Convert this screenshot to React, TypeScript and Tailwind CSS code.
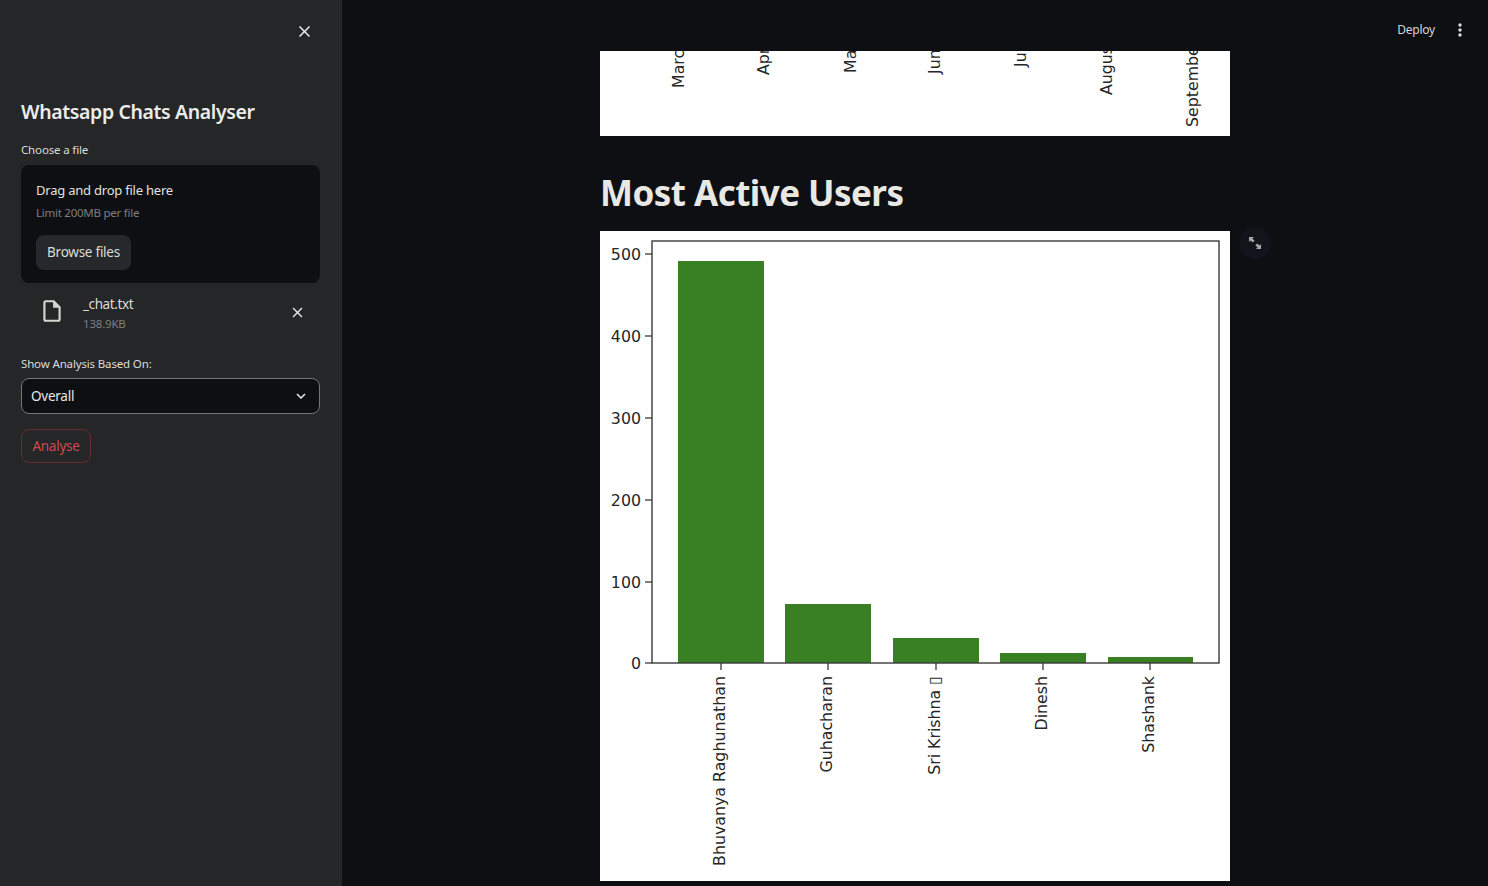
import React from "react";
import { MdClose, MdOutlineInsertDriveFile, MdMoreVert, MdKeyboardArrowDown } from "react-icons/md";

const sans = "font-['Noto_Sans','Open_Sans',sans-serif]";

const months = [
  { n: "March", x: 78, y: 37 },
  { n: "April", x: 163, y: 24 },
  { n: "May", x: 250, y: 22 },
  { n: "June", x: 334, y: 23 },
  { n: "July", x: 420, y: 16 },
  { n: "August", x: 506, y: 44 },
  { n: "September", x: 592, y: 76 },
];

const ticks = [
  { l: "500", y: 23 },
  { l: "400", y: 105 },
  { l: "300", y: 187 },
  { l: "200", y: 269 },
  { l: "100", y: 351 },
  { l: "0", y: 432 },
];

const bars = [
  { n: "Bhuvanya Raghunathan", x: 78, w: 86, top: 30, cx: 121 },
  { n: "Guhacharan", x: 185, w: 86, top: 373, cx: 228 },
  { n: "Sri Krishna ▯", x: 293, w: 86, top: 407, cx: 336 },
  { n: "Dinesh", x: 400, w: 86, top: 422, cx: 443 },
  { n: "Shashank", x: 508, w: 85, top: 426, cx: 550 },
];

function MonthsChart() {
  return (
    <div className="w-[630px] h-[85px] bg-white overflow-hidden shrink-0">
      <svg width="630" height="85" viewBox="0 0 630 85">
        {months.map((m) => (
          <text
            key={m.n}
            transform={`translate(${m.x + 6},${m.y}) rotate(-90)`}
            fontFamily="DejaVu Sans, sans-serif"
            fontSize="15.8"
            fill="#262626"
          >
            {m.n}
          </text>
        ))}
      </svg>
    </div>
  );
}

function UsersChart() {
  return (
    <div className="w-[630px] h-[650px] bg-white shrink-0">
      <svg width="630" height="650" viewBox="0 0 630 650">
        {bars.map((b) => (
          <rect key={b.n} x={b.x} y={b.top} width={b.w} height={432 - b.top} fill="#388023" />
        ))}
        <rect x="52" y="10" width="567" height="422" fill="none" stroke="#3a3a3a" strokeWidth="1.4" />
        {ticks.map((t) => (
          <g key={t.l}>
            <line x1="45" x2="52" y1={t.y} y2={t.y} stroke="#3a3a3a" strokeWidth="1.3" />
            <text x="41" y={t.y + 6} textAnchor="end" fontFamily="DejaVu Sans, sans-serif" fontSize="15.8" fill="#262626">
              {t.l}
            </text>
          </g>
        ))}
        {bars.map((b) => (
          <g key={b.n + "l"}>
            <line x1={b.cx} x2={b.cx} y1="432" y2="439" stroke="#3a3a3a" strokeWidth="1.3" />
            <text
              transform={`translate(${b.cx + 4},445) rotate(-90)`}
              textAnchor="end"
              fontFamily="DejaVu Sans, sans-serif"
              fontSize="15.8"
              fill="#262626"
            >
              {b.n}
            </text>
          </g>
        ))}
      </svg>
    </div>
  );
}

function Sidebar() {
  return (
    <aside className={`w-[342px] h-full shrink-0 bg-[#252628] flex flex-col px-[21px] ${sans}`}>
      <div className="h-[62px] flex items-center justify-end pr-[7px] text-[#e6e6e3]">
        <MdClose size={19} />
      </div>
      <h2 className="mt-[33px] h-[34px] text-[19.5px] leading-[34px] font-semibold text-[#ecece8] tracking-[-0.38px] whitespace-nowrap">
        Whatsapp Chats Analyser
      </h2>
      <label className="mt-[11px] h-[20px] text-[11.5px] leading-[20px] text-[#dcdcd8] tracking-[-0.15px]">Choose a file</label>
      <div className="mt-[5px] w-[299px] h-[118px] rounded-lg bg-[#0d0f13] px-[15px] pt-[14px] flex flex-col items-start">
        <div className="text-[13px] leading-[22px] text-[#e2e2de] tracking-[-0.22px]">Drag and drop file here</div>
        <div className="mt-[3px] text-[11.5px] leading-[18px] text-[#7d7f83] tracking-[-0.25px]">Limit 200MB per file</div>
        <button className="mt-[13px] w-[95px] h-[35px] rounded-lg bg-[#26282c] text-[13.5px] text-[#dcdcd8] tracking-[-0.25px]">
          Browse files
        </button>
      </div>
      <div className="mt-[11px] h-[40px] flex items-center pl-[18px] pr-[15px]">
        <MdOutlineInsertDriveFile size={26} className="text-[#d6d6d0] shrink-0 -translate-y-[3px]" />
        <div className="ml-[18px] flex-1 flex flex-col">
          <span className="text-[13.5px] leading-[20px] text-[#dcdcd8] tracking-[-0.4px]">_chat.txt</span>
          <span className="text-[11.5px] leading-[20px] text-[#7d7f83] tracking-[-0.2px]">138.9KB</span>
        </div>
        <MdClose size={17} className="text-[#e6e6e3] shrink-0 -translate-y-[2px]" />
      </div>
      <label className="mt-[20px] h-[20px] text-[11.5px] leading-[20px] text-[#dcdcd8] tracking-[-0.15px]">Show Analysis Based On:</label>
      <div className="mt-[4px] w-[299px] h-[36px] rounded-lg border border-[#77776f] bg-[#0d0f13] flex items-center justify-between pl-[9px] pr-[9px]">
        <span className="text-[13.5px] text-[#e8e8e4] tracking-[-0.25px]">Overall</span>
        <MdKeyboardArrowDown size={18} className="text-[#ecece8]" />
      </div>
      <button className="mt-[15px] w-[70px] h-[34px] rounded-lg border border-[#6b2a2c] text-[13.5px] text-[#cf4a4e] tracking-[-0.25px]">
        Analyse
      </button>
    </aside>
  );
}

export default function App() {
  return (
    <div className="w-[1488px] h-[886px] flex overflow-hidden bg-[#0d0f13]">
      <Sidebar />
      <main className="flex-1 flex flex-col h-full overflow-hidden">
        <header className={`h-[51px] shrink-0 flex items-start justify-end pt-[20px] pr-[18px] ${sans}`}>
          <span className="text-[12px] leading-[20px] text-[#d6d6d2] tracking-[-0.25px]">Deploy</span>
          <MdMoreVert size={20} className="ml-[15px] text-[#dcdcd8]" />
        </header>
        <div className="relative w-[630px] mx-auto flex flex-col">
          <MonthsChart />
          <h1 className={`mt-[34px] h-[46px] text-[35px] leading-[46px] font-bold text-[#e8e8e4] tracking-[-0.55px] whitespace-nowrap ${sans}`}>
            Most Active Users
          </h1>
          <div className="mt-[15px]">
            <UsersChart />
          </div>
          <button className="absolute left-[639px] top-[176px] w-[32px] h-[32px] rounded-full bg-[#12141c] flex items-center justify-center">
            <svg width="14" height="14" viewBox="0 0 14 14" fill="#a8a8a8">
              <path d="M1 1h5L4.4 2.6 6.6 4.8 4.8 6.6 2.6 4.4 1 6z" />
              <path d="M13 13H8l1.6-1.6-2.2-2.2 1.8-1.8 2.2 2.2L13 8z" />
            </svg>
          </button>
        </div>
      </main>
    </div>
  );
}
